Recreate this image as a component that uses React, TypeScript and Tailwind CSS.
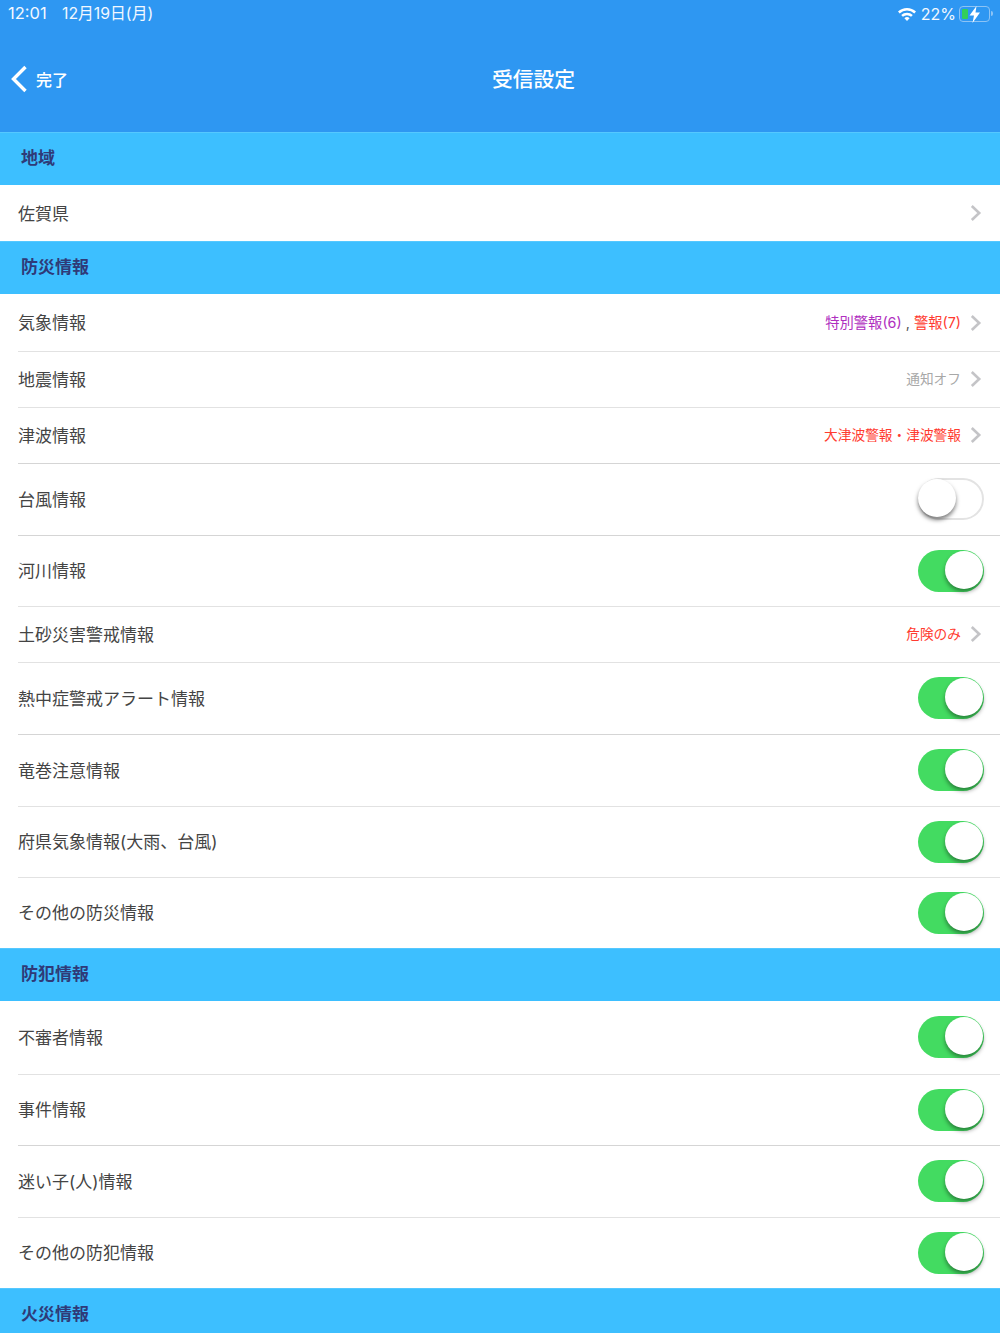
const font = { fontFamily: 'Inter, "Noto Sans CJK JP", "Noto Sans", sans-serif' };

function Chevron() {
  return (
    <svg width="12" height="18" viewBox="0 0 12 18" fill="none" className="ml-[9px] mr-[2px] shrink-0">
      <path d="M1.8 2 L9.2 9 L1.8 16" stroke="#c4c4c7" strokeWidth="2.6" />
    </svg>
  );
}

function Toggle({ on }: { on: boolean }) {
  if (on) {
    return (
      <div className="relative w-[66px] h-[42px] mb-[1px] rounded-full bg-[#43db61] shrink-0">
        <div className="absolute right-[1px] top-[1px] w-[38px] h-[38px] rounded-full bg-white shadow-[0_3px_4px_rgba(0,0,0,0.4)]" />
      </div>
    );
  }
  return (
    <div className="relative w-[66px] h-[42px] mb-[1px] rounded-full bg-white border-2 border-[#e3e3e3] shrink-0">
      <div className="absolute left-[-2px] top-[-1px] w-[38px] h-[38px] rounded-full bg-white shadow-[0_3px_4px_rgba(0,0,0,0.5)]" />
    </div>
  );
}

function Section({ title, h }: { title: string; h: string }) {
  return (
    <div className={`${h} bg-[#3dbfff] pl-[21px] pt-[13px] text-[17px] leading-[25px] font-bold text-[#2f3a78] border-t border-[#55c8ff]`}>
      {title}
    </div>
  );
}

function Row({
  label,
  h,
  line = "none",
  labelClass = "mt-[2px]",
  children,
}: {
  label: string;
  h: string;
  line?: "none" | "light" | "dark";
  labelClass?: string;
  children?: React.ReactNode;
}) {
  const inner =
    line === "light" ? "border-t border-[#e2e2e2]" : line === "dark" ? "border-t border-[#d5d5d5]" : "";
  return (
    <div className={`${h} bg-white pl-[18px]`}>
      <div className={`h-full flex items-center justify-between pr-[16px] ${inner}`}>
        <span className={`text-[17px] text-[#444444] ${labelClass}`}>{label}</span>
        <div className="flex items-center">{children}</div>
      </div>
    </div>
  );
}

export default function App() {
  return (
    <div className="w-[1000px] h-[1334px] overflow-hidden bg-white" style={font}>
      <header className="h-[132px] bg-[#2e97f2] text-white">
        <div className="h-[27px] flex items-center justify-between pl-[8px] pr-[7px] text-[#f2f8ff]">
          <div className="flex items-center">
            <span className="w-[54px] text-[16.5px]">12:01</span>
            <span className="text-[15.8px]">12月19日(月)</span>
          </div>
          <div className="flex items-center">
            <svg width="18" height="14" viewBox="0 0 18 14" fill="white" className="mr-[5px]">
              <path d="M0 4.6 A13 13 0 0 1 18 4.6 L16.3 6.4 A10.5 10.5 0 0 0 1.7 6.4 Z" />
              <path d="M3.2 8 A8.5 8.5 0 0 1 14.8 8 L13.1 9.8 A6 6 0 0 0 4.9 9.8 Z" />
              <path d="M6.4 11.3 A3.8 3.8 0 0 1 11.6 11.3 L9 14 Z" />
            </svg>
            <span className="mr-[3px] text-[16px]">22%</span>
            <div className="relative w-[31px] h-[16px] rounded-[4px] border border-[#8cc3f5]">
              <div className="absolute left-[2px] top-[2px] w-[6px] h-[10px] rounded-[1px] bg-[#32cf5a]" />
              <svg width="12" height="17" viewBox="0 0 12 17" fill="white" className="absolute left-[9px] top-[-1px]">
                <path d="M7.5 0 L0.5 9.5 L5 9.5 L3.5 17 L11 6.5 L6.5 6.5 Z" />
              </svg>
            </div>
            <div className="w-[2px] h-[5px] ml-[1px] bg-[#8cc3f5] rounded-r-sm" />
          </div>
        </div>
        <div className="relative h-[105px] flex items-center">
          <svg width="18" height="28" viewBox="0 0 18 28" fill="none" className="ml-[10px] mb-[1px]">
            <path d="M15.5 2 L3.5 14 L15.5 26" stroke="white" strokeWidth="3.4" />
          </svg>
          <span className="ml-[8px] text-[16px] font-medium">完了</span>
          <div className="absolute left-[492px] top-[37px] text-[20.75px] font-medium leading-[32px]">受信設定</div>
        </div>
      </header>

      <Section title="地域" h="h-[53px]" />
      <Row label="佐賀県" h="h-[56px]" labelClass="mt-[3px]"><Chevron /></Row>
      <Section title="防災情報" h="h-[53px]" />
      <Row label="気象情報" h="h-[57px]">
        <span className="text-[14.3px]">
          <span className="text-[#b02fc0]">特別警報(6)</span>
          <span className="text-[#555]"> , </span>
          <span className="text-[#ff3b30]">警報(7)</span>
        </span>
        <Chevron />
      </Row>
      <Row label="地震情報" h="h-[56px]" line="light">
        <span className="text-[13.7px] text-[#a8a8a8]">通知オフ</span>
        <Chevron />
      </Row>
      <Row label="津波情報" h="h-[56px]" line="light">
        <span className="text-[13.7px] text-[#ff3b30]">大津波警報・津波警報</span>
        <Chevron />
      </Row>
      <Row label="台風情報" h="h-[72px]" line="dark"><Toggle on={false} /></Row>
      <Row label="河川情報" h="h-[71px]" line="dark"><Toggle on /></Row>
      <Row label="土砂災害警戒情報" h="h-[56px]" line="light">
        <span className="text-[13.7px] text-[#ff3b30]">危険のみ</span>
        <Chevron />
      </Row>
      <Row label="熱中症警戒アラート情報" h="h-[72px]" line="light"><Toggle on /></Row>
      <Row label="竜巻注意情報" h="h-[72px]" line="dark"><Toggle on /></Row>
      <Row label="府県気象情報(大雨、台風)" h="h-[71px]" line="light"><Toggle on /></Row>
      <Row label="その他の防災情報" h="h-[71px]" line="light"><Toggle on /></Row>
      <Section title="防犯情報" h="h-[53px]" />
      <Row label="不審者情報" h="h-[73px]"><Toggle on /></Row>
      <Row label="事件情報" h="h-[71px]" line="light"><Toggle on /></Row>
      <Row label="迷い子(人)情報" h="h-[72px]" line="dark"><Toggle on /></Row>
      <Row label="その他の防犯情報" h="h-[71px]" line="light"><Toggle on /></Row>
      <Section title="火災情報" h="h-[45px]" />
    </div>
  );
}
